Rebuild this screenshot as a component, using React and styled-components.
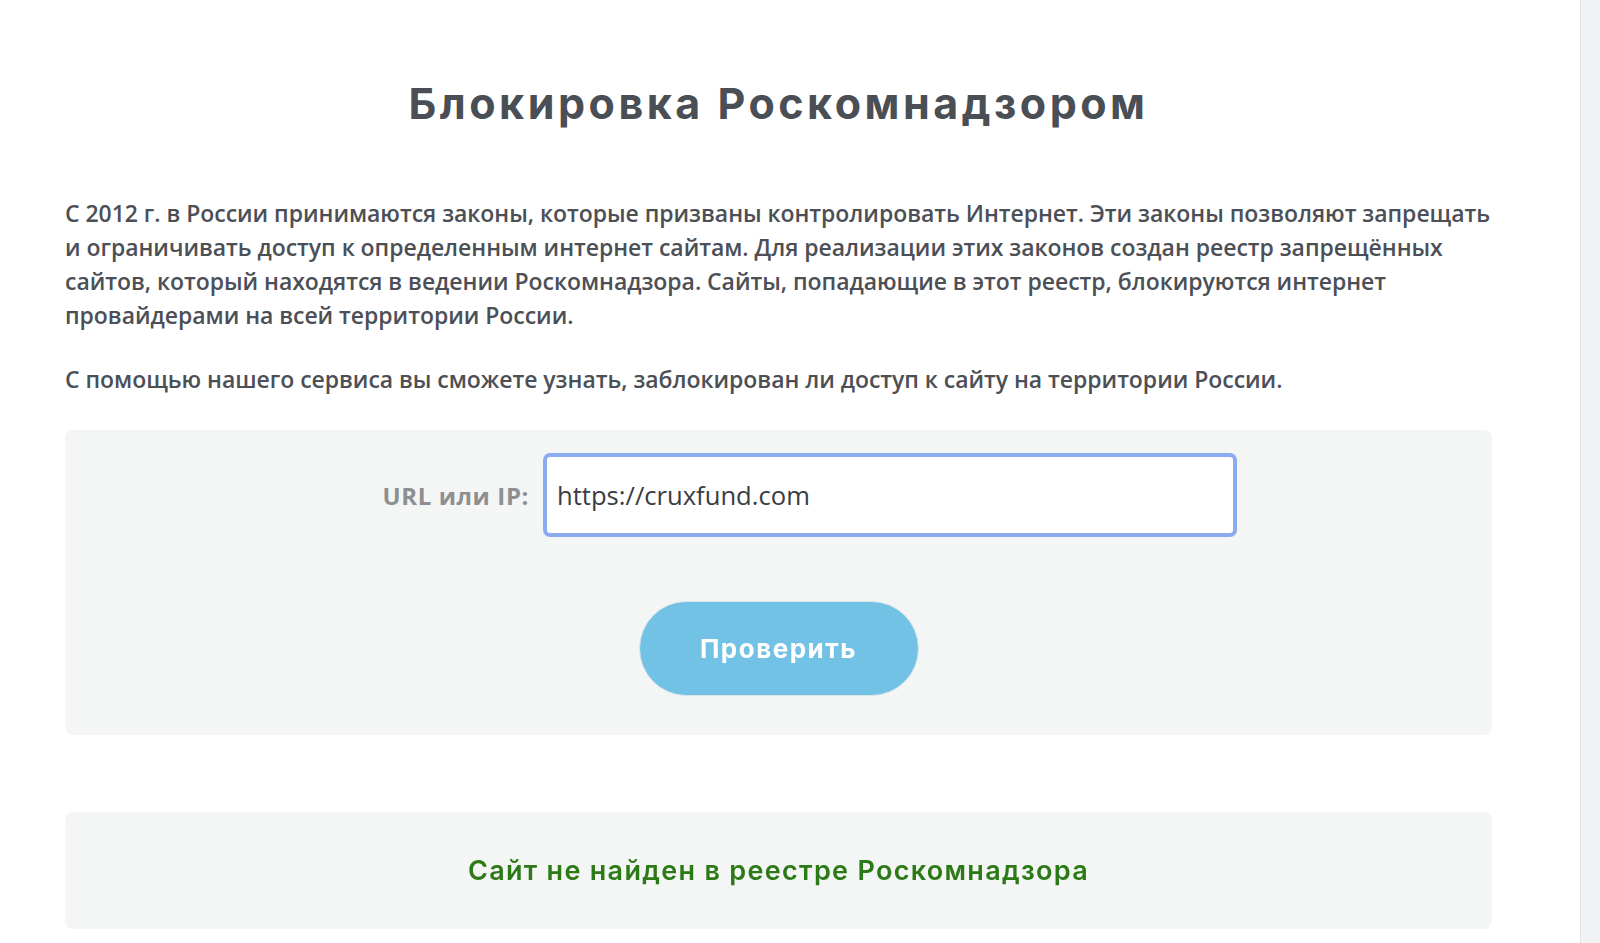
import React, {useState, useEffect, useRef} from 'react';
import styled, {createGlobalStyle} from 'styled-components';

const GlobalStyle = createGlobalStyle`
  html, body {
    margin: 0;
    padding: 0;
    background: #ffffff;
  }
  body {
    font-family: "Open Sans", "Noto Sans", sans-serif;
    color: #4c5056;
  }
`;

const Page = styled.div`
  display: flex;
  min-height: 943px;
  overflow: hidden;
`;

const Main = styled.main`
  flex: 1;
  min-width: 0;
  padding: 0 88px 0 65px;
  box-sizing: border-box;
`;

const ScrollGutter = styled.div`
  width: 20px;
  flex-shrink: 0;
  background: #f1f2f4;
  border-left: 1px solid #e4e6e9;
  box-sizing: border-box;
`;

const Title = styled.h1`
  margin: 0;
  padding-top: 79px;
  font-family: "Inter", "Open Sans", sans-serif;
  font-weight: 700;
  font-size: 43px;
  letter-spacing: 3.5px;
  line-height: 48px;
  text-align: center;
  color: #4a4e55;
`;

const Text = styled.p`
  margin: ${p => p.$top || 0}px 0 0;
  font-size: 23px;
  letter-spacing: -0.04px;
  line-height: 34px;
  font-weight: 600;
  color: #4c5056;
  white-space: nowrap;
`;

const Card = styled.section`
  background: #f4f5f5;
  border-radius: 8px;
  margin-top: ${p => p.$top}px;
  padding: ${p => p.$pad};
`;

const FormRow = styled.div`
  display: grid;
  grid-template-columns: 464px 694px;
  column-gap: 14px;
  align-items: center;
`;

const Label = styled.label`
  text-align: right;
  font-size: 24px;
  font-weight: 700;
  letter-spacing: 0.6px;
  color: #8e8f90;
`;

const Input = styled.input`
  height: 84px;
  box-sizing: border-box;
  border: 4px solid #8aabf0;
  border-radius: 7px;
  padding: 0 10px;
  font-family: "Open Sans", sans-serif;
  font-size: 25.6px;
  color: #3a3d42;
  outline: none;
  background: #fff;
  caret-color: #3a3d42;
`;

const ButtonRow = styled.div`
  display: flex;
  justify-content: center;
  margin-top: 64px;
`;

const CheckButton = styled.button`
  width: 280px;
  height: 95px;
  border-radius: 48px;
  border: 1px solid #dfe6ea;
  background: #72c2e6;
  color: #ffffff;
  font-family: "Inter", "Open Sans", sans-serif;
  font-weight: 700;
  font-size: 26px;
  letter-spacing: 1.5px;
  cursor: pointer;
`;

const Result = styled.div`
  text-align: center;
  font-family: "Inter", "Open Sans", sans-serif;
  font-size: 27px;
  font-weight: 600;
  letter-spacing: 1.3px;
  line-height: 117px;
  color: #2b7a16;
`;

export default function App() {
  const [url, setUrl] = useState('https://cruxfund.com');
  const inputRef = useRef(null);

  useEffect(() => {
    const el = inputRef.current;
    if (el) {
      el.focus();
      el.setSelectionRange(0, 0);
    }
  }, []);

  return (
    <>
      <GlobalStyle />
      <Page>
        <Main>
          <Title>Блокировка Роскомнадзором</Title>
          <Text $top={69}>
            С 2012 г. в России принимаются законы, которые призваны контролировать Интернет. Эти законы позволяют запрещать<br />
            и ограничивать доступ к определенным интернет сайтам. Для реализации этих законов создан реестр запрещённых<br />
            сайтов, который находятся в ведении Роскомнадзора. Сайты, попадающие в этот реестр, блокируются интернет<br />
            провайдерами на всей территории России.
          </Text>
          <Text $top={30}>
            С помощью нашего сервиса вы сможете узнать, заблокирован ли доступ к сайту на территории России.
          </Text>
          <Card $top={34} $pad="23px 0 39px">
            <FormRow>
              <Label htmlFor="url">URL или IP:</Label>
              <Input id="url" ref={inputRef} value={url} onChange={e => setUrl(e.target.value)} />
            </FormRow>
            <ButtonRow>
              <CheckButton>Проверить</CheckButton>
            </ButtonRow>
          </Card>
          <Card $top={77} $pad="0">
            <Result>Сайт не найден в реестре Роскомнадзора</Result>
          </Card>
        </Main>
        <ScrollGutter />
      </Page>
    </>
  );
}
